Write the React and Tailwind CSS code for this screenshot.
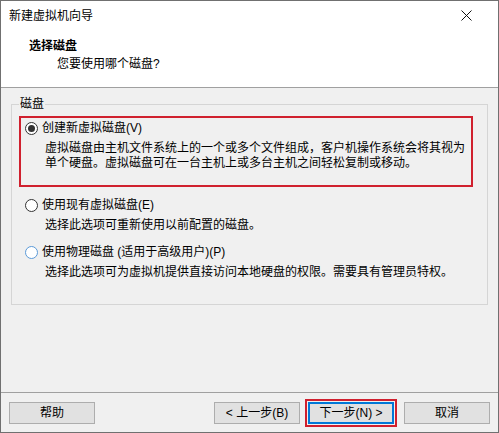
import React from 'react';

const font = "font-['Liberation_Sans','Noto_Sans_CJK_SC',sans-serif]";

const Radio = ({ checked, hover }) => (
  <span
    className={`flex h-[13px] w-[13px] shrink-0 items-center justify-center rounded-full border bg-white ${
      hover ? 'border-[#5b9ad8]' : 'border-[#333333]'
    }`}
  >
    {checked && <span className="h-[7px] w-[7px] rounded-full bg-[#333333]" />}
  </span>
);

const Option = ({ checked, hover, label, children }) => (
  <div>
    <div className="flex h-[16px] items-center">
      <span className="ml-[4px] flex">
        <Radio checked={checked} hover={hover} />
      </span>
      <span className="ml-[4px] leading-[16px]">{label}</span>
    </div>
    <div className="ml-[24px] mt-[5px] leading-[15px]">{children}</div>
  </div>
);

const Button = ({ children, primary }) => (
  <button
    className={`h-[22px] w-[86px] border bg-[#e1e1e1] text-[12px] leading-[20px] text-black ${
      primary ? 'border-[#0078d7] shadow-[inset_0_0_0_1px_#0078d7]' : 'border-[#adadad]'
    }`}
  >
    {children}
  </button>
);

export default function App() {
  return (
    <div className={`flex h-[433px] w-[499px] flex-col border border-[#707070] bg-[#f0f0f0] text-[12px] text-black ${font}`}>
      {/* Title bar */}
      <div className="flex h-[29px] items-center justify-between bg-white pl-[8px]">
        <span className="leading-[16px]">新建虚拟机向导</span>
        <svg className="mr-[26px]" width="11" height="11" viewBox="0 0 11 11">
          <path d="M0.5 0.5 L10.5 10.5 M10.5 0.5 L0.5 10.5" stroke="#111" strokeWidth="1" fill="none" />
        </svg>
      </div>

      {/* Header */}
      <div className="h-[58px] border-b border-[#a0a0a0] bg-white">
        <div className="pl-[28px] pt-[8px] font-bold leading-[16px]">选择磁盘</div>
        <div className="mt-[2px] pl-[56px] leading-[16px]">您要使用哪个磁盘?</div>
      </div>

      {/* Body */}
      <fieldset className="mx-[10px] mt-[8px] h-[209px] border border-[#d5d5d5] px-[7px]">
        <legend className="px-[1px] leading-[16px]">磁盘</legend>
        <div className="-ml-[0px] mr-[7px] mt-[4px] h-[71px] border-2 border-[#d0202e] pt-[2px]">
          <Option checked label="创建新虚拟磁盘(V)">
            <div>虚拟磁盘由主机文件系统上的一个或多个文件组成，客户机操作系统会将其视为</div>
            <div>单个硬盘。虚拟磁盘可在一台主机上或多台主机之间轻松复制或移动。</div>
          </Option>
        </div>
        <div className="mt-[10px] pl-[2px]">
          <Option label="使用现有虚拟磁盘(E)">选择此选项可重新使用以前配置的磁盘。</Option>
        </div>
        <div className="mt-[11px] pl-[2px]">
          <Option hover label="使用物理磁盘 (适用于高级用户)(P)">
            选择此选项可为虚拟机提供直接访问本地硬盘的权限。需要具有管理员特权。
          </Option>
        </div>
      </fieldset>

      <div className="flex-1" />

      {/* Footer */}
      <div className="flex h-[40px] items-start border-t border-[#a0a0a0] px-[8px] pt-[9px]">
        <Button>帮助</Button>
        <div className="flex-1" />
        <Button>&lt; 上一步(B)</Button>
        <div className="-mt-[3px] ml-[5px] border-2 border-[#d0202e] p-[1px]">
          <Button primary>下一步(N) &gt;</Button>
        </div>
        <div className="ml-[7px]">
          <Button>取消</Button>
        </div>
      </div>
    </div>
  );
}
